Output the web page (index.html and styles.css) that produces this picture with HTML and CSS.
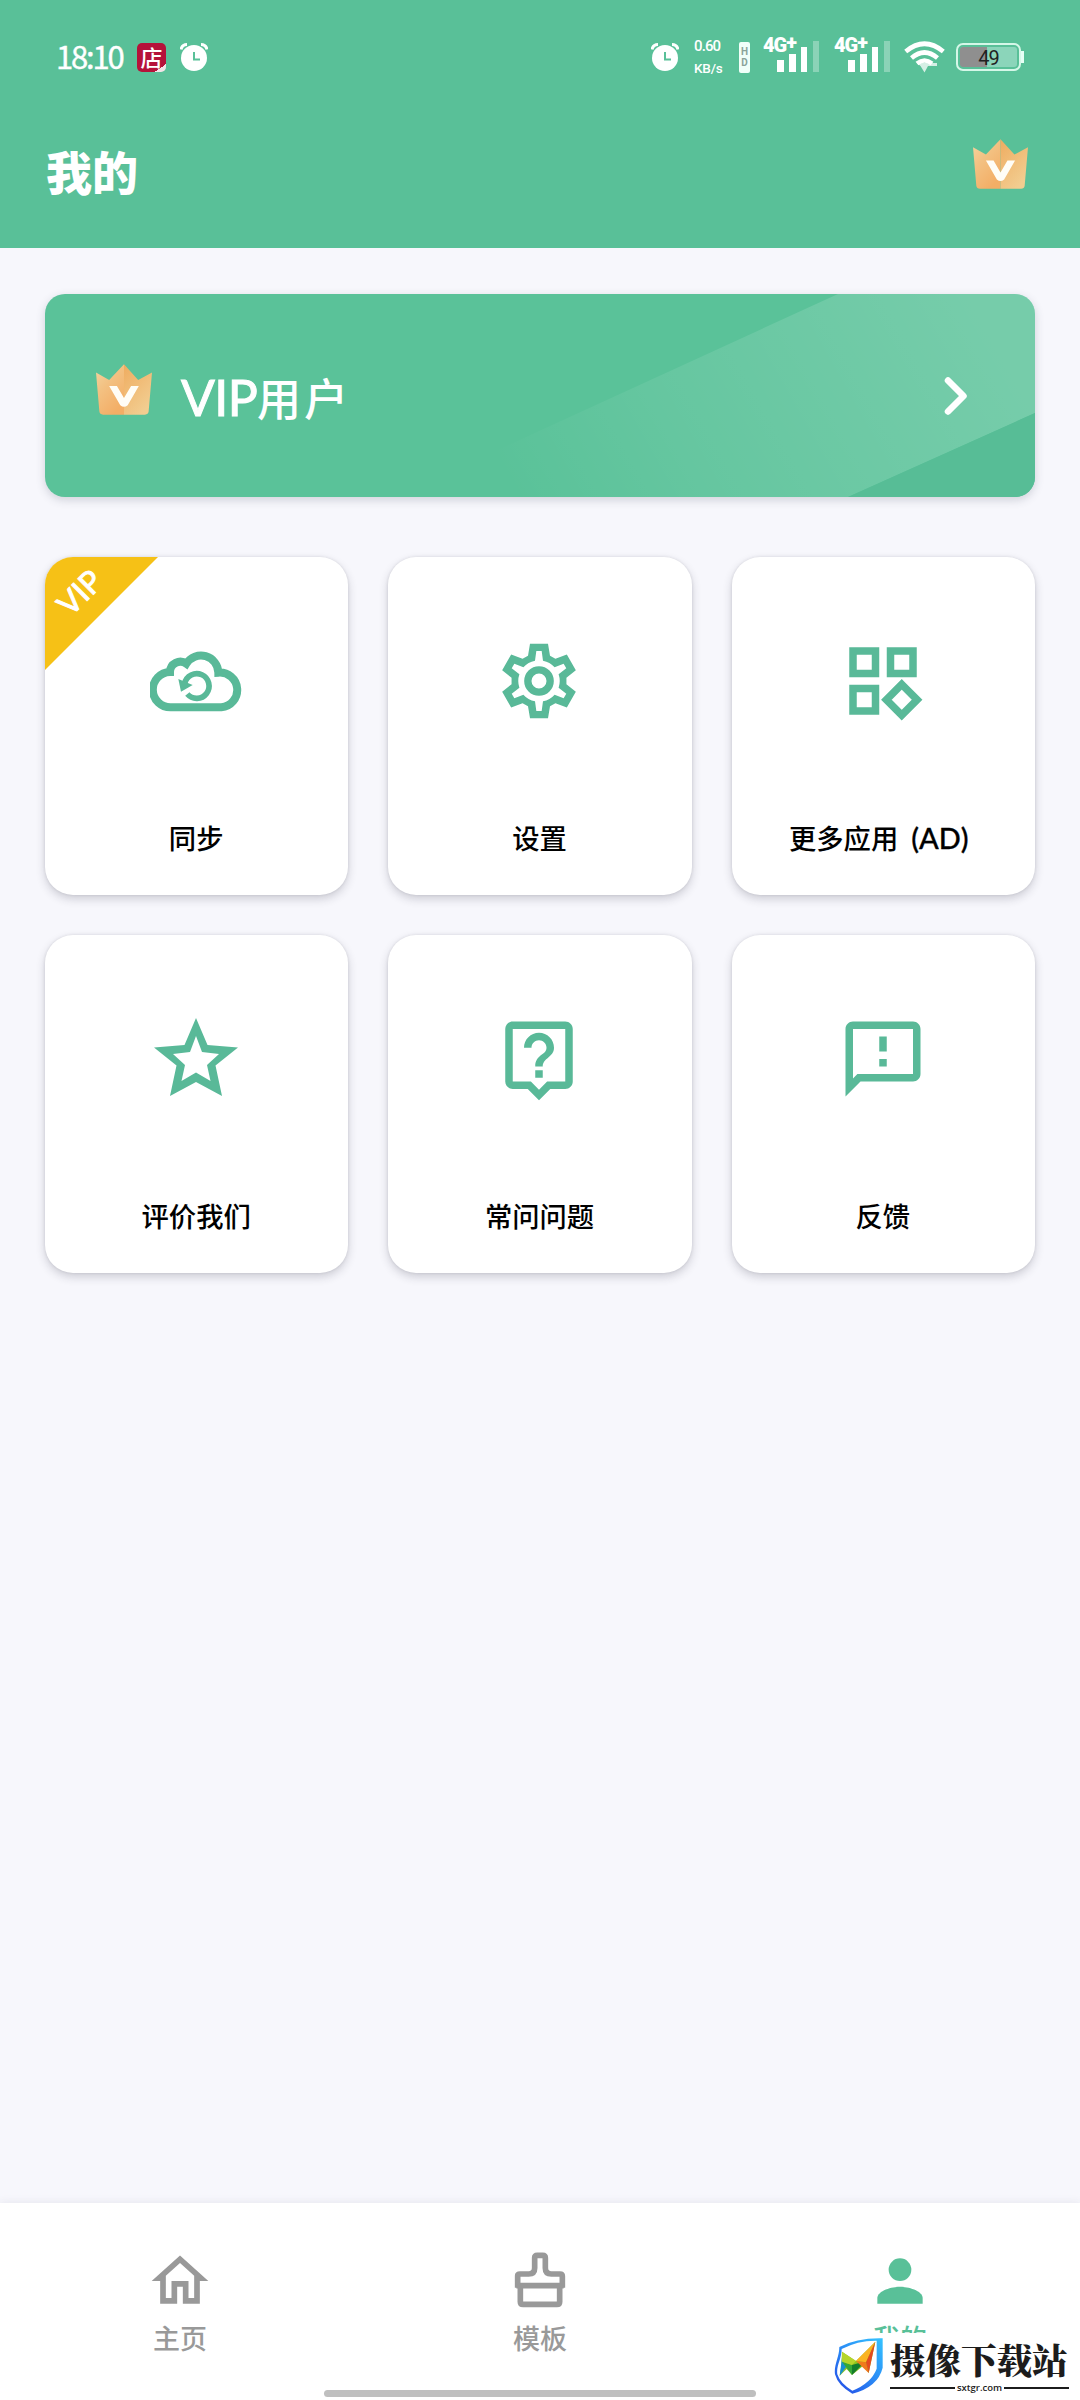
FILE: index.html
```html
<!DOCTYPE html>
<html lang="zh-CN">
<head>
<meta charset="utf-8">
<title>我的</title>
<link rel="stylesheet" href="styles.css">
</head>
<body>
<svg class="defs" width="0" height="0" aria-hidden="true">
  <defs>
    <linearGradient id="gold-left" x1="0" y1="0" x2="0.6" y2="1"><stop offset="0" stop-color="#f3d6a2"/><stop offset="0.45" stop-color="#f3c182"/><stop offset="1" stop-color="#f3ae66"/></linearGradient>
    <linearGradient id="gold-right" x1="0" y1="0" x2="0.6" y2="1"><stop offset="0" stop-color="#efac60"/><stop offset="1" stop-color="#f2cd90"/></linearGradient>
    <symbol id="crown" viewBox="98 85 166 151">
      <path d="M98 110L137 132L181 86V235H119Q109 235 108 226Z" fill="url(#gold-left)"/>
      <path d="M181 86L223 132L264 110L254 226Q253 235 243 235H181Z" fill="url(#gold-right)"/>
      <path d="M137 150H160L181 186L202 150H225L192 207Q181 217 170 207Z" fill="#fffdf6"/>
    </symbol>
    <symbol id="alarm" viewBox="0 0 28 28">
      <circle cx="14" cy="15" r="13" fill="#fff"/>
      <path d="M1 6.500Q2 1.500 7 1.500M27 6.500Q26 1.500 21 1.500" fill="none" stroke="#fff" stroke-width="3"/>
      <path d="M14 9V16.500H20" fill="none" stroke="#59c098" stroke-width="2"/>
    </symbol>
  </defs>
</svg>
<div class="screen">
  <header class="header">
    <div class="status">
      <div class="status-left">
        <span class="clock">18:10</span>
        <span class="shop-app">店</span>
        <svg class="status-alarm" width="28" height="28"><use href="#alarm"/></svg>
      </div>
      <div class="status-right">
        <svg width="28" height="28"><use href="#alarm"/></svg>
        <div class="speed"><span>0.60</span><span>KB/s</span></div>
        <div class="hd"><span>H</span><span>D</span></div>
        <div class="signal">
          <span class="net">4G<b>+</b></span>
          <svg width="44" height="31" viewBox="0 0 44 31"><path d="M1 19H8V31H1zM13 13H20V31H13zM25 6H31V31H25z" fill="#fff"/><path d="M37 0H43V31H37z" fill="#fff" opacity=".3"/></svg>
        </div>
        <div class="signal">
          <span class="net">4G<b>+</b></span>
          <svg width="44" height="31" viewBox="0 0 44 31"><path d="M1 19H8V31H1zM13 13H20V31H13zM25 6H31V31H25z" fill="#fff"/><path d="M37 0H43V31H37z" fill="#fff" opacity=".3"/></svg>
        </div>
        <svg class="wifi" width="41" height="32" viewBox="0 0 41 32"><g fill="none" stroke="#fff" stroke-width="4.600"><path d="M1.700 10.500Q20.500-5 39.300 10.500"/><path d="M7.500 17Q20.500 6 33.500 17"/><path d="M13 22.500Q20.500 16.500 28 22.500"/></g><path d="M13 22H33V25H24L20.500 31.500L16.500 25z" fill="#fff" opacity=".75"/></svg>
        <div class="battery"><span>49</span></div>
      </div>
    </div>
    <div class="titlebar">
      <h1>我的</h1>
      <svg class="crown" width="55" height="50"><use href="#crown"/></svg>
    </div>
  </header>

  <main class="content">
    <section class="vip-card">
      <svg class="vip-shine" width="990" height="203" viewBox="0 0 990 203">
        <defs><linearGradient id="shine" gradientUnits="userSpaceOnUse" x1="470" y1="203" x2="900" y2="-40"><stop offset="0" stop-color="#fff" stop-opacity="0"/><stop offset=".35" stop-color="#fff" stop-opacity=".07"/><stop offset="1" stop-color="#fff" stop-opacity=".17"/></linearGradient></defs>
        <path d="M793 0H990V119L803 203H350Z" fill="url(#shine)"/>
        <path d="M990 119V203H803Z" fill="#57bd96"/>
      </svg>
      <svg class="crown" width="56" height="51"><use href="#crown"/></svg>
      <p class="vip-name"><span>VIP</span>用户</p>
      <svg class="chevron" width="24" height="40" viewBox="0 0 24 40"><path d="M4 4.500L19.500 20L4 35.500" fill="none" stroke="#fff" stroke-width="6.500" stroke-linecap="round" stroke-linejoin="round"/></svg>
    </section>

    <section class="grid">
      <div class="tile">
        <div class="ribbon"><span>VIP</span></div>
        <svg width="92" height="90" viewBox="360 288 276 270"><path d="M423 502A53 53 0 0 1 420 396A31 31 0 0 1 469 371A52 52 0 0 1 565 398A52 52 0 0 1 574 502Z" fill="none" stroke="#59b998" stroke-width="24"/><path d="M464 430A37 37 0 1 1 472 462" fill="none" stroke="#59b998" stroke-width="17"/><path d="M445 417L488 435L453 455Z" fill="#59b998"/></svg>
        <p>同步</p>
      </div>
      <div class="tile">
        <svg width="90" height="90" viewBox="-135 -135 270 270" fill="#59b998"><path fill-rule="evenodd" d="M-33-76L-27-112H27L33-76L49.300-66.600L83.500-79.400L110.500-32.600L82.300-9.400V9.400L110.500 32.600L83.500 79.400L49.300 66.600L33 76L27 112H-27L-33 76L-49.300 66.600L-83.500 79.400L-110.500 32.600L-82.300 9.400V-9.400L-110.500-32.600L-83.500-79.400L-49.300-66.600ZM-12-61A62 62 0 0 0-46.800-40.900L-73.900-51.900L-81.900-38.100L-58.800-20.100A62 62 0 0 0-58.800 20.100L-81.900 38.100L-73.900 51.900L-46.800 40.900A62 62 0 0 0-12 61L-8 90H8L12 61A62 62 0 0 0 46.800 40.900L73.900 51.900L81.900 38.100L58.800 20.100A62 62 0 0 0 58.800-20.100L81.900-38.100L73.900-51.900L46.800-40.900A62 62 0 0 0 12-61L8-90H-8Z"/><circle r="33.500" fill="none" stroke="#59b998" stroke-width="22"/></svg>
        <p>设置</p>
      </div>
      <div class="tile">
        <svg width="90" height="90" viewBox="0 0 24 24" fill="none" stroke="#59b998" stroke-width="2"><path d="M4 4h6v6H4zM14 4h6v6h-6zM4 14h6v6H4zM17 12.900L21.100 17L17 21.100L12.900 17z"/></svg>
        <p class="wide">更多应用<span class="latin">(AD)</span></p>
      </div>
      <div class="tile">
        <svg width="90" height="90" viewBox="0 0 90 90" fill="#59b998"><path fill-rule="evenodd" d="M45 4L56.500 31L87 33.500L64.500 51.500L71 82L45 68L19 82L25.500 51.500L3 33.500L33.500 31ZM45 22L39 38L22 40L34 51L30.500 67L45 58.500L59.500 67L56 51L68 40L51 38Z"/></svg>
        <p>评价我们</p>
      </div>
      <div class="tile">
        <svg width="90" height="90" viewBox="0 0 24 24" fill="#59b998"><path d="M19 2H5c-1.110 0-2 .9-2 2v14c0 1.100.89 2 2 2h4l3 3 3-3h4c1.100 0 2-.9 2-2V4c0-1.100-.9-2-2-2zm0 16h-4.830L12 20.170 9.830 18H5V4h14v14zm-8-3h2v2h-2zm1-8c1.100 0 2 .9 2 2 0 2-3 1.750-3 5h2c0-2.250 3-2.500 3-5 0-2.210-1.790-4-4-4s-4 1.790-4 4h2c0-1.100.9-2 2-2z"/></svg>
        <p>常问问题</p>
      </div>
      <div class="tile">
        <svg width="90" height="90" viewBox="0 0 24 24" fill="#59b998"><path d="M20 2H4c-1.100 0-2 .9-2 2v18l4-4h14c1.100 0 2-.9 2-2V4c0-1.100-.9-2-2-2zm0 14H5.170L4 17.170V4h16v12zM11 12h2v2h-2zM11 6h2v4h-2z"/></svg>
        <p>反馈</p>
      </div>
    </section>
  </main>

  <nav class="tabs">
    <div class="tab">
      <svg width="68" height="68" viewBox="0 0 24 24" fill="#999"><path d="M12 5.690l5 4.500V18h-2v-6H9v6H7v-7.810l5-4.500M12 3L2 12h3v8h6v-6h2v6h6v-8h3L12 3z"/></svg>
      <span>主页</span>
    </div>
    <div class="tab">
      <svg width="68" height="68" viewBox="1218 203 204 204" fill="none" stroke="#999" stroke-width="17"><path d="M1253 325V289Q1253 284 1260 284H1286Q1304 284 1304 266V236Q1304 228 1312 228H1328Q1336 228 1336 236V266Q1336 284 1354 284H1380Q1387 284 1387 290V325M1249 319H1391M1261 322V367Q1261 375 1269 375H1371Q1379 375 1379 367V322"/></svg>
      <span>模板</span>
    </div>
    <div class="tab active">
      <svg width="68" height="68" viewBox="0 0 24 24" fill="#59c098"><circle cx="12" cy="8" r="4"/><path d="M12 14c-2.670 0-8 1.340-8 4v2h16v-2c0-2.660-5.330-4-8-4z"/></svg>
      <span>我的</span>
    </div>
    <div class="home-bar"></div>
    <div class="watermark">
      <svg width="49" height="57" viewBox="0 0 147 171">
        <defs><linearGradient id="shield" x1="1" y1="0" x2=".2" y2="1"><stop offset="0" stop-color="#35c3ff"/><stop offset=".5" stop-color="#2b8ff6"/><stop offset="1" stop-color="#2453e8"/></linearGradient></defs>
        <path fill-rule="evenodd" fill="url(#shield)" d="M16 30Q70 2 146 4V92Q132 150 55 170Q12 146 3 112C-1 84 16 60 16 30ZM23 36C23 66 6 86 10 112Q19 140 55 161Q112 138 128 95V11Q72 10 23 36Z"/>
        <path d="M24 44L22 86L17 116L38 96L54 114L88 86L104 108L124 14L66 72Z" fill="#8fc31f"/>
        <path d="M24 62L17 116L38 88Z" fill="#168fd0"/>
        <path d="M24 74L54 84V114Z" fill="#35a838"/><path d="M24 44L66 72L54 84L24 74Z" fill="#b5d52b"/>
        <path d="M54 84L96 72L54 114Z" fill="#147d2c"/>
        <path d="M66 72L124 14L96 76Z" fill="#fbb321"/><path d="M66 72L96 76L104 108Z" fill="#f07a1c"/><path d="M124 14L104 108L96 76Z" fill="#e54a20"/>
      </svg>
      <div class="brand">
        <strong>摄像下载站</strong>
        <div class="site"><i></i><span>sxtgr.com</span><i></i></div>
      </div>
    </div>
  </nav>
</div>
</body>
</html>
```
FILE: styles.css
```css
* { box-sizing: border-box; }
body {
  margin: 0;
  background: #f7f7fc;
  font-family: "Noto Sans CJK SC", sans-serif;
  color: #000;
}
h1, p { margin: 0; }
svg { display: block; flex: none; }
.defs { position: absolute; }
.screen {
  width: 1080px;
  height: 2400px;
  display: flex;
  flex-direction: column;
  overflow: hidden;
}

/* header */
.header { height: 248px; background: #59c098; color: #fff; flex: none; }
.status {
  height: 114px;
  padding: 0 56px;
  display: flex;
  justify-content: space-between;
  align-items: center;
}
.status-left, .status-right { display: flex; align-items: center; }
.clock {
  font: 400 31px/40px "Noto Sans CJK SC", sans-serif;
  letter-spacing: -2.2px;
  width: 81px;
  padding-bottom: 2px;
  -webkit-text-stroke: .4px #fff;
}
.shop-app {
  width: 29px;
  height: 29px;
  border-radius: 5px;
  background: linear-gradient(145deg, #b5123a 84%, #f3e4e8 84%);
  font-size: 22px;
  line-height: 27px;
  font-weight: 500;
  text-align: center;
}
.status-alarm { margin-left: 14px; }
.speed {
  width: 30px;
  margin-left: 15px;
  display: flex;
  flex-direction: column;
  gap: 8px;
  font: 500 15px/14px Roboto, sans-serif;
  letter-spacing: -0.9px;
}
.speed span:last-child { font-size: 13.5px; letter-spacing: -0.2px; }
.hd {
  width: 11px;
  height: 31px;
  margin-left: 15px;
  border-radius: 2px;
  background: #f0fff9;
  color: #8aa39a;
  display: flex;
  flex-direction: column;
  justify-content: center;
  text-align: center;
  font: 700 10px/11px Roboto, sans-serif;
}
.signal {
  position: relative;
  width: 57px;
  height: 35px;
  margin-left: 13px;
  margin-bottom: 5px;
  display: flex;
  justify-content: flex-end;
  align-items: flex-end;
}
.signal + .signal { margin-left: 14px; }
.net {
  position: absolute;
  left: 0;
  top: -2px;
  font: 900 20px/20px Roboto, sans-serif;
  letter-spacing: -1px;
}
.net b { position: relative; top: -3px; }
.wifi { margin-left: 13px; }
.battery {
  position: relative;
  width: 65px;
  height: 28px;
  margin-left: 11px;
  margin-right: 3px;
  border: 2px solid #d5f7e8;
  border-radius: 7px;
  padding: 2px;
  background: linear-gradient(90deg, #8f8f8f 27px, #8bd5ba 27px) content-box;
  color: #222;
  text-align: center;
  font: 400 20px/22px Roboto, sans-serif;
  letter-spacing: -1px;
}
.battery::after {
  content: "";
  position: absolute;
  right: -5px;
  top: 6px;
  width: 3px;
  height: 12px;
  background: #e6fff5;
}
.titlebar {
  height: 114px;
  padding: 0 52px 0 46px;
  display: flex;
  justify-content: space-between;
  align-items: center;
}
.titlebar h1 { font-size: 46px; font-weight: 900; line-height: 60px; padding-bottom: 2px; }
.titlebar .crown { margin-bottom: 15px; }

/* content */
.content { flex: 1; padding: 46px 45px 0; }
.vip-card {
  position: relative;
  height: 203px;
  border-radius: 20px;
  overflow: hidden;
  padding: 0 67px 0 51px;
  display: flex;
  align-items: center;
  background: #5ac299;
  color: #fff;
  box-shadow: 0 3px 10px rgba(50, 60, 80, .2);
}
.vip-shine { position: absolute; left: 0; top: 0; }
.vip-card .crown { margin-bottom: 12px; }
.vip-card .chevron { position: relative; margin-left: auto; }
.vip-name {
  margin-left: 29px;
  padding-top: 3px;
  font-size: 44px;
  font-weight: 500;
  line-height: 64px;
  letter-spacing: 3px;
  white-space: nowrap;
}
.vip-name span {
  font-family: Lato, sans-serif;
  font-size: 50px;
  font-weight: 400;
  letter-spacing: -0.6px;
  -webkit-text-stroke: 1px #fff;
}
.grid {
  margin-top: 60px;
  display: grid;
  grid-template-columns: repeat(3, 1fr);
  gap: 40px;
}
.tile {
  position: relative;
  height: 338px;
  border-radius: 28px;
  background: #fff;
  overflow: hidden;
  display: flex;
  flex-direction: column;
  align-items: center;
  padding: 79px 1px 0 0;
  box-shadow: 0 4px 10px rgba(40, 40, 60, .2), 0 0 3px rgba(40, 40, 60, .12);
}
.tile p {
  margin-top: 91px;
  font-size: 27.3px;
  font-weight: 500;
  line-height: 40px;
  white-space: nowrap;
}
.tile .wide { padding-right: 8px; }
.latin {
  font-family: Lato, sans-serif;
  font-size: 29px;
  line-height: 30px;
  margin-left: 13px;
  -webkit-text-stroke: .3px #000;
}
.ribbon {
  position: absolute;
  left: 0;
  top: 0;
  width: 113px;
  height: 113px;
  background: #f6c116;
  clip-path: polygon(0 0, 100% 0, 0 100%);
}
.ribbon span {
  position: absolute;
  left: -6px;
  top: 15px;
  width: 80px;
  line-height: 40px;
  text-align: center;
  transform: rotate(-45deg);
  font-family: Lato, sans-serif;
  font-size: 31px;
  -webkit-text-stroke: .9px #fff;
  color: #fff;
}

/* bottom navigation */
.tabs {
  position: relative;
  flex: none;
  height: 197px;
  background: #fff;
  display: grid;
  grid-template-columns: repeat(3, 1fr);
  box-shadow: 0 -1px 8px rgba(50, 50, 90, .08);
}
.tab {
  padding-top: 44px;
  display: flex;
  flex-direction: column;
  align-items: center;
  color: #999;
  font-size: 27px;
  font-weight: 500;
  line-height: 40px;
}
.tab span { margin-top: 3px; }
.tab.active { color: #59c098; }
.home-bar {
  position: absolute;
  left: 324px;
  bottom: 3px;
  width: 432px;
  height: 7px;
  border-radius: 4px;
  background: #bfbfbf;
}
.watermark {
  position: absolute;
  right: 0;
  bottom: 0;
  width: 247px;
  height: 67px;
  padding: 4px 11px 0 1px;
  background: #fff;
  display: flex;
  justify-content: space-between;
}
.brand { width: 179px; color: #1c1c1c; }
.brand strong {
  display: block;
  font-family: "Noto Serif CJK SC", "Noto Sans CJK SC", serif;
  font-size: 35.5px;
  font-weight: 900;
  line-height: 44px;
  white-space: nowrap;
}
.site {
  display: flex;
  align-items: center;
  justify-content: space-between;
  font: 600 9.500px/14px "Open Sans", sans-serif;
}
.site i { width: 65px; height: 2px; background: #1c1c1c; }
```
